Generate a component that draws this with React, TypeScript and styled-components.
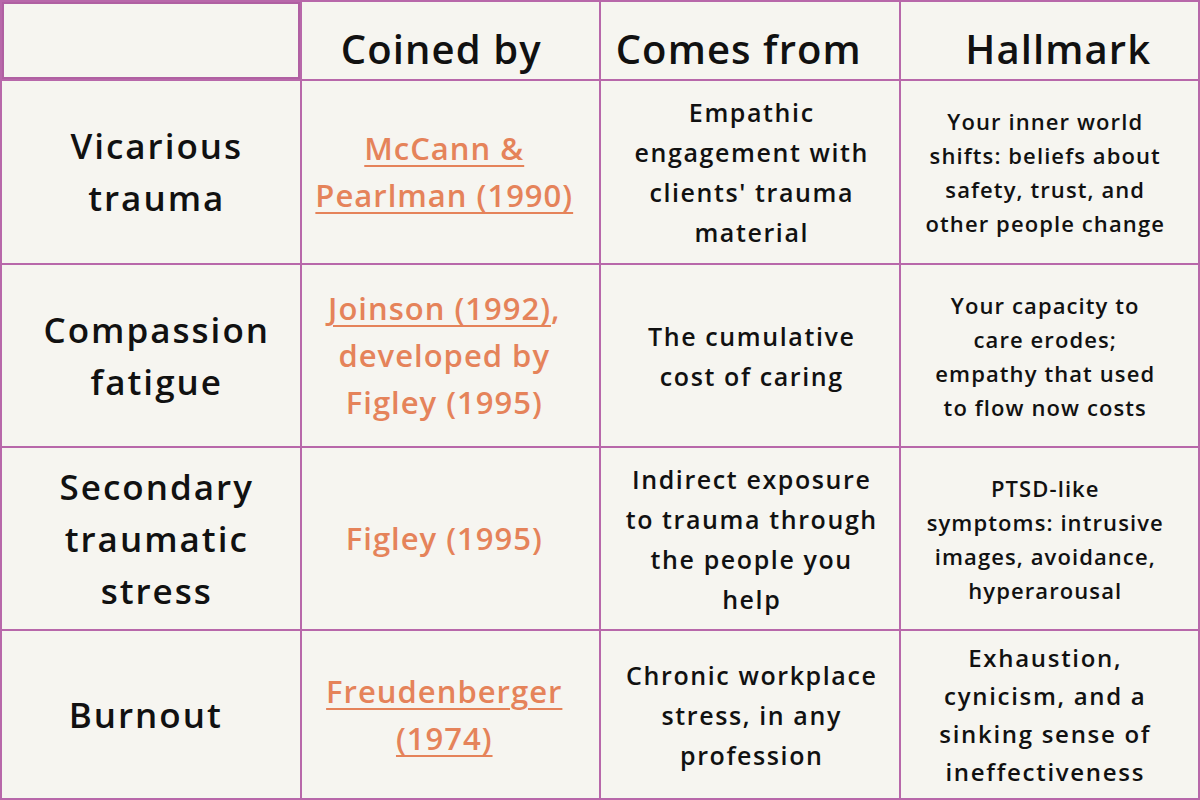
import React from 'react';
import styled, { createGlobalStyle } from 'styled-components';

const GlobalStyle = createGlobalStyle`
  html, body {
    margin: 0;
    padding: 0;
    background: #f6f5f0;
  }
  body {
    font-family: "Open Sans", Lato, sans-serif;
    color: #111111;
  }
`;

const Table = styled.div`
  width: 1200px;
  height: 800px;
  box-sizing: border-box;
  display: grid;
  grid-template-columns: repeat(4, 1fr);
  grid-template-rows: 77px 182px 181px 181px 167px;
  gap: 2px;
  padding: 2px;
  background: #b868aa;
`;

// $shift nudges the centred text sideways, as in the source layout
const Cell = styled.div<{ $corner?: boolean; $shift?: number }>`
  background: #f6f5f0;
  display: flex;
  align-items: center;
  justify-content: center;
  text-align: center;
  box-sizing: border-box;
  padding: 0 ${p => 16 - (p.$shift || 0)}px 0 ${p => 16 + (p.$shift || 0)}px;
  ${p => p.$corner && 'box-shadow: inset 0 0 0 2px #b060a2;'}
`;

const HeadText = styled.div`
  font-size: 40px;
  font-weight: 600;
  letter-spacing: 1.1px;
  padding-top: 16px;
  white-space: nowrap;
`;

const RowTitle = styled.div`
  font-size: 35px;
  font-weight: 600;
  line-height: 52px;
  letter-spacing: 2px;
  white-space: nowrap;
`;

const Source = styled.div`
  font-size: 31px;
  font-weight: 600;
  line-height: 47px;
  letter-spacing: 1px;
  color: #e5835a;
  white-space: nowrap;
`;

const Link = styled.span`
  text-decoration: underline;
  text-decoration-thickness: 2px;
  text-underline-offset: 5px;
`;

const Origin = styled.div`
  font-size: 25px;
  font-weight: 600;
  line-height: 40px;
  letter-spacing: 1.6px;
  white-space: nowrap;
`;

const Mark = styled.div<{ $big?: boolean }>`
  font-size: ${p => (p.$big ? '24px' : '22px')};
  font-weight: 600;
  line-height: ${p => (p.$big ? '38px' : '34px')};
  letter-spacing: ${p => (p.$big ? '1.7px' : '1.1px')};
  white-space: nowrap;
`;

interface Row {
  title: React.ReactNode;
  source: React.ReactNode;
  origin: React.ReactNode;
  mark: React.ReactNode;
  bigMark?: boolean;
}

const rows: Row[] = [
  {
    title: <>Vicarious<br />trauma</>,
    source: <><Link>McCann &amp;</Link><br /><Link>Pearlman (1990)</Link></>,
    origin: <>Empathic<br />engagement with<br />clients' trauma<br />material</>,
    mark: <>Your inner world<br />shifts: beliefs about<br />safety, trust, and<br />other people change</>,
  },
  {
    title: <>Compassion<br />fatigue</>,
    source: <><Link>Joinson (1992)</Link>,<br />developed by<br />Figley (1995)</>,
    origin: <>The cumulative<br />cost of caring</>,
    mark: <>Your capacity to<br />care erodes;<br />empathy that used<br />to flow now costs</>,
  },
  {
    title: <>Secondary<br />traumatic<br />stress</>,
    source: <>Figley (1995)</>,
    origin: <>Indirect exposure<br />to trauma through<br />the people you<br />help</>,
    mark: <>PTSD-like<br />symptoms: intrusive<br />images, avoidance,<br />hyperarousal</>,
  },
  {
    title: <>Burnout</>,
    source: <><Link>Freudenberger</Link><br /><Link>(1974)</Link></>,
    origin: <>Chronic workplace<br />stress, in any<br />profession</>,
    mark: <>Exhaustion,<br />cynicism, and a<br />sinking sense of<br />ineffectiveness</>,
    bigMark: true,
  },
];

const App: React.FC = () => {
  return (
    <>
      <GlobalStyle />
      <Table>
        <Cell $corner />
        <Cell $shift={-9}><HeadText>Coined by</HeadText></Cell>
        <Cell $shift={-11}><HeadText>Comes from</HeadText></Cell>
        <Cell $shift={9}><HeadText>Hallmark</HeadText></Cell>
        {rows.map((row, i) => (
          <React.Fragment key={i}>
            <Cell $shift={i === 3 ? -5 : 6}><RowTitle>{row.title}</RowTitle></Cell>
            <Cell $shift={-6}><Source>{row.source}</Source></Cell>
            <Cell $shift={2}><Origin>{row.origin}</Origin></Cell>
            <Cell $shift={-4}><Mark $big={row.bigMark}>{row.mark}</Mark></Cell>
          </React.Fragment>
        ))}
      </Table>
    </>
  );
};

export default App;
